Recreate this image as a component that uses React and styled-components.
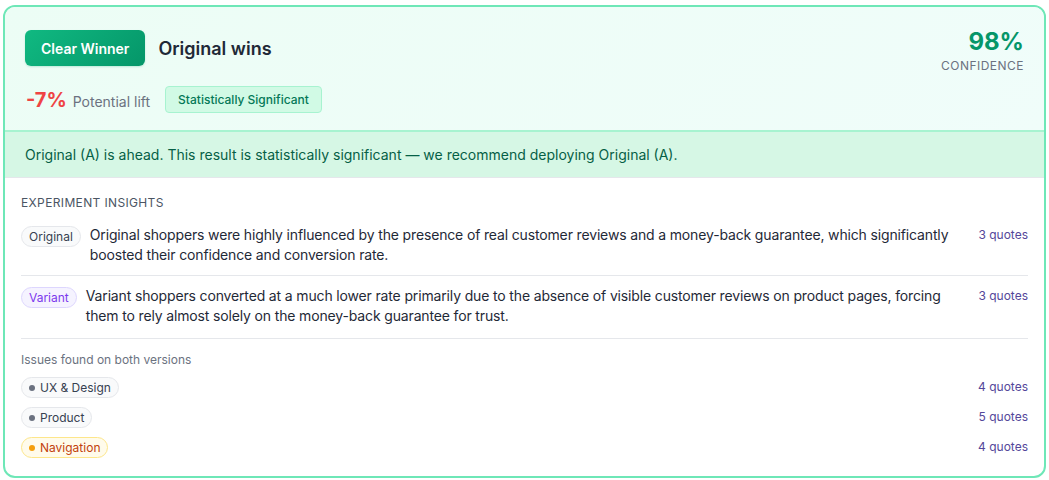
import React from "react";
import styled, { createGlobalStyle } from "styled-components";

const GlobalStyle = createGlobalStyle`
  html, body {
    margin: 0;
    padding: 0;
    background: #ffffff;
  }
  body {
    font-family: Inter, "Noto Sans", "Liberation Sans", sans-serif;
    -webkit-font-smoothing: antialiased;
  }
`;

const Page = styled.div`
  padding: 5px 3px 3px 3px;
`;

const Card = styled.div`
  border: 2px solid #6ee7b7;
  border-radius: 12px;
  overflow: hidden;
  background: #ffffff;
`;

// top summary block
const Header = styled.div`
  background: linear-gradient(135deg, #ecfdf5 0%, #f0fdfa 100%);
  padding: 23px 20px 17px 20px;
  display: flex;
  justify-content: space-between;
  align-items: flex-start;
  border-bottom: 2px solid #a7f3d0;
`;

const HeaderLeft = styled.div`
  display: flex;
  flex-direction: column;
  gap: 20px;
`;

const TitleRow = styled.div`
  display: flex;
  align-items: center;
  gap: 13px;
`;

const WinnerButton = styled.div`
  background: linear-gradient(135deg, #10b981 0%, #059669 100%);
  color: #ffffff;
  font-size: 14px;
  font-weight: 600;
  height: 36px;
  padding: 0 16px;
  border-radius: 6px;
  display: flex;
  align-items: center;
  box-shadow: 0 1px 2px rgba(5, 150, 105, 0.2);
`;

const Title = styled.h2`
  margin: 0;
  font-size: 18px;
  font-weight: 600;
  color: #1f2937;
`;

const LiftRow = styled.div`
  display: flex;
  align-items: center;
  gap: 15px;
  margin-left: 1px;
`;

const Lift = styled.div`
  display: flex;
  align-items: baseline;
  gap: 6px;
`;

const LiftValue = styled.span`
  font-size: 20px;
  font-weight: 700;
  color: #ef4444;
`;

const LiftLabel = styled.span`
  font-size: 14px;
  color: #6b7280;
`;

const SigBadge = styled.span`
  font-size: 12px;
  font-weight: 500;
  color: #047857;
  background: #d1fae5;
  border: 1px solid #a7f3d0;
  border-radius: 4px;
  padding: 0 12px;
  height: 25px;
  display: flex;
  align-items: center;
`;

const Confidence = styled.div`
  display: flex;
  flex-direction: column;
  align-items: flex-end;
  margin-top: -4px;
`;

const ConfidenceValue = styled.div`
  font-size: 24px;
  font-weight: 700;
  color: #059669;
  line-height: 32px;
`;

const ConfidenceLabel = styled.div`
  font-size: 12px;
  color: #6b7280;
  letter-spacing: 0.04em;
  text-transform: uppercase;
  line-height: 16px;
`;

const Banner = styled.div`
  background: #d6f7e5;
  color: #065f46;
  font-size: 14px;
  padding: 0 20px;
  height: 45px;
  display: flex;
  align-items: center;
  border-bottom: 1px solid #e5e7eb;
`;

const Body = styled.div`
  padding: 17px 16px 18px 16px;
`;

const SectionTitle = styled.div`
  font-size: 12px;
  color: #4b5563;
  letter-spacing: 0.03em;
  text-transform: uppercase;
  line-height: 16px;
  margin-bottom: 14px;
`;

const InsightRow = styled.div`
  display: flex;
  align-items: flex-start;
  gap: 9px;
  padding: ${(p) => (p.first ? "0 0 10px 0" : "10px 0 12px 0")};
  border-bottom: 1px solid #e5e7eb;
`;

const Pill = styled.span`
  flex-shrink: 0;
  display: inline-flex;
  align-items: center;
  gap: 5px;
  font-size: 12px;
  line-height: 19px;
  padding: 0 7px;
  border-radius: 999px;
  margin-top: 1px;
  background: ${(p) => p.bg || "#f9fafb"};
  border: 1px solid ${(p) => p.border || "#e5e7eb"};
  color: ${(p) => p.color || "#374151"};
`;

const Dot = styled.span`
  width: 6px;
  height: 6px;
  border-radius: 50%;
  background: ${(p) => p.color || "#6b7280"};
`;

const InsightText = styled.p`
  margin: 0;
  flex: 1;
  font-size: 14px;
  line-height: 20px;
  letter-spacing: -0.15px;
  color: #1f2937;
  padding-right: 12px;
`;

const Quotes = styled.span`
  flex-shrink: 0;
  font-size: 12px;
  line-height: 20px;
  color: #54479a;
`;

const IssuesTitle = styled.div`
  font-size: 12px;
  color: #6b7280;
  line-height: 16px;
  margin: 13px 0 8px 0;
`;

const IssueList = styled.div`
  display: flex;
  flex-direction: column;
  gap: 8px;
`;

const IssueRow = styled.div`
  display: flex;
  align-items: center;
  justify-content: space-between;
`;

const insights = [
  {
    label: "Original",
    text:
      "Original shoppers were highly influenced by the presence of real customer reviews and a money-back guarantee, which significantly boosted their confidence and conversion rate.",
    quotes: 3,
  },
  {
    label: "Variant",
    variant: true,
    text:
      "Variant shoppers converted at a much lower rate primarily due to the absence of visible customer reviews on product pages, forcing them to rely almost solely on the money-back guarantee for trust.",
    quotes: 3,
  },
];

const issues = [
  { name: "UX & Design", quotes: 4 },
  { name: "Product", quotes: 5 },
  { name: "Navigation", quotes: 4, warn: true },
];

export default function App() {
  return (
    <Page>
      <GlobalStyle />
      <Card>
        <Header>
          <HeaderLeft>
            <TitleRow>
              <WinnerButton>Clear Winner</WinnerButton>
              <Title>Original wins</Title>
            </TitleRow>
            <LiftRow>
              <Lift>
                <LiftValue>-7%</LiftValue>
                <LiftLabel>Potential lift</LiftLabel>
              </Lift>
              <SigBadge>Statistically Significant</SigBadge>
            </LiftRow>
          </HeaderLeft>
          <Confidence>
            <ConfidenceValue>98%</ConfidenceValue>
            <ConfidenceLabel>Confidence</ConfidenceLabel>
          </Confidence>
        </Header>

        <Banner>
          Original (A) is ahead. This result is statistically significant — we
          recommend deploying Original (A).
        </Banner>

        <Body>
          <SectionTitle>Experiment Insights</SectionTitle>
          {insights.map((item, i) => (
            <InsightRow key={item.label} first={i === 0}>
              {item.variant ? (
                <Pill bg="#f5f3ff" border="#ddd6fe" color="#7c3aed">
                  {item.label}
                </Pill>
              ) : (
                <Pill>{item.label}</Pill>
              )}
              <InsightText>{item.text}</InsightText>
              <Quotes>{item.quotes} quotes</Quotes>
            </InsightRow>
          ))}

          <IssuesTitle>Issues found on both versions</IssuesTitle>
          <IssueList>
            {issues.map((issue) => (
              <IssueRow key={issue.name}>
                {issue.warn ? (
                  <Pill bg="#fffbeb" border="#fde68a" color="#c2410c">
                    <Dot color="#f59e0b" />
                    {issue.name}
                  </Pill>
                ) : (
                  <Pill>
                    <Dot />
                    {issue.name}
                  </Pill>
                )}
                <Quotes>{issue.quotes} quotes</Quotes>
              </IssueRow>
            ))}
          </IssueList>
        </Body>
      </Card>
    </Page>
  );
}
